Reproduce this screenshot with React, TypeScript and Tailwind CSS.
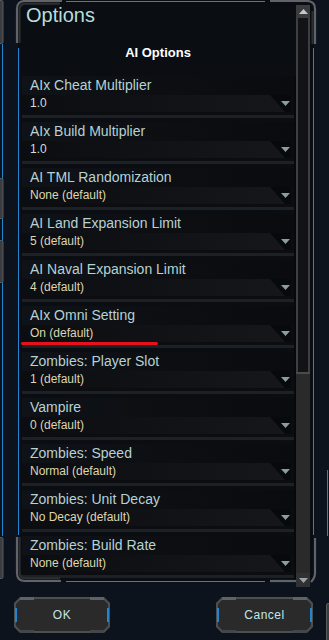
import React from 'react';

type Opt = { label: string; value: string; isDefault: boolean };

const options: Opt[] = [
  { label: 'AIx Cheat Multiplier', value: '1.0', isDefault: false },
  { label: 'AIx Build Multiplier', value: '1.0', isDefault: false },
  { label: 'AI TML Randomization', value: 'None (default)', isDefault: true },
  { label: 'AI Land Expansion Limit', value: '5 (default)', isDefault: true },
  { label: 'AI Naval Expansion Limit', value: '4 (default)', isDefault: true },
  { label: 'AIx Omni Setting', value: 'On (default)', isDefault: true },
  { label: 'Zombies: Player Slot', value: '1 (default)', isDefault: true },
  { label: 'Vampire', value: '0 (default)', isDefault: true },
  { label: 'Zombies: Speed', value: 'Normal (default)', isDefault: true },
  { label: 'Zombies: Unit Decay', value: 'No Decay (default)', isDefault: true },
  { label: 'Zombies: Build Rate', value: 'None (default)', isDefault: true },
];

const DownArrow = ({ color = '#8d9c9d' }: { color?: string }) => (
  <svg width="9" height="5" viewBox="0 0 9 5">
    <path d="M0 0 H9 L4.5 5 Z" fill={color} />
  </svg>
);

const OptionRow = ({ opt, marked }: { opt: Opt; marked?: boolean }) => (
  <div className="relative h-[46px]">
    <div className="h-[42px] bg-[#0b0d11] border-b-[3px] border-[#1d2025]">
      <div className="h-[19px] pl-2 text-[14px] leading-[19px] text-[#b6d2d4] bg-[linear-gradient(90deg,#0f1217,#0a0b0e)]">
        {opt.label}
      </div>
      <div className="relative ml-[2px] mr-[3px] h-[17px] bg-[#08090c]">
        <div className="absolute inset-0 bg-[linear-gradient(90deg,#0b0d11,#15171b)] [clip-path:polygon(0_0,calc(100%-21px)_0,calc(100%-6px)_100%,0_100%)]" />
        <div className="relative flex h-full items-center justify-between pl-[6px] pr-[1px]">
          <span
            className={
              opt.isDefault
                ? 'text-[12px] leading-[17px] text-[#ddd6b0]'
                : 'text-[12px] leading-[17px] text-[#d2dcdc]'
            }
          >
            {opt.value}
          </span>
          <DownArrow />
        </div>
      </div>
    </div>
    {marked && (
      <div className="absolute left-[-1px] top-[36px] h-[3px] w-[137px] rounded-full bg-[#e8101a]" />
    )}
  </div>
);

const Button = ({ label, width }: { label: string; width: string }) => (
  <div className={`relative h-[36px] ${width}`}>
    <div className="absolute inset-0 bg-[#4c4f52] [clip-path:polygon(6px_0,calc(100%-6px)_0,100%_6px,100%_calc(100%-6px),calc(100%-6px)_100%,6px_100%,0_calc(100%-6px),0_6px)]" />
    <div className="absolute inset-[2px] bg-[#2a2a2b] [clip-path:polygon(5px_0,calc(100%-5px)_0,100%_5px,100%_calc(100%-5px),calc(100%-5px)_100%,5px_100%,0_calc(100%-5px),0_5px)]" />
    <div className="absolute left-[6px] top-0 h-[3px] w-[14px] bg-[#5f6266]" />
    <div className="absolute right-[6px] top-0 h-[3px] w-[14px] bg-[#5f6266]" />
    <div className="absolute left-[6px] bottom-0 h-[3px] w-[14px] bg-[#44474a]" />
    <div className="absolute right-[6px] bottom-0 h-[3px] w-[14px] bg-[#44474a]" />
    <div className="absolute left-[1px] top-[11px] h-[14px] w-[2px] bg-[#2186cf]" />
    <div className="absolute right-[1px] top-[11px] h-[14px] w-[2px] bg-[#2186cf]" />
    <div className="relative flex h-full items-center justify-center text-[12px] tracking-[0.5px] text-[#c4e6e6]">
      {label}
    </div>
  </div>
);

const App: React.FC = () => {
  return (
    <div className="relative w-[329px] h-[640px] overflow-hidden bg-[#0c131d] font-['Liberation_Sans',Arial,sans-serif]">
      <div className="flex h-[590px]">
        <div className="w-[18px] shrink-0" />

        {/* main panel */}
        <div className="flex h-[582px] w-[278px] shrink-0 flex-col bg-[#0a0d12]">
          <div className="h-[27px] pl-2 pt-[3px] text-[20px] leading-[24px] text-[#b6dede]">Options</div>
          <div className="mt-[18px] h-[16px] pl-[4px] pr-[2px] text-center text-[13px] font-bold leading-[16px] text-white">
            AI Options
          </div>
          <div className="mt-[15px] flex flex-1 pl-[4px]">
            <div className="w-[272px]">
              {options.map((o, i) => (
                <OptionRow key={o.label} opt={o} marked={i === 5} />
              ))}
            </div>
            <div className="w-[2px] bg-[#07080a]" />
          </div>
        </div>

        {/* scrollbar */}
        <div className="flex h-[587px] w-[14px] shrink-0 flex-col bg-[#0a0d12] pt-[5px]">
          <div className="flex h-[13px] items-center justify-center bg-[#3b3c3e]">
            <svg width="9" height="5" viewBox="0 0 9 5">
              <path d="M0 5 H9 L4.5 0 Z" fill="#c4c8ca" />
            </svg>
          </div>
          <div className="flex-1 border-x-2 border-[#3d3e41] bg-[#111317]" />
          <div className="h-[201px] border-t-2 border-[#4a4b4d] bg-[#2a2a2b]" />
          <div className="flex h-[14px] items-center justify-center bg-[#303132]">
            <DownArrow color="#9aa3a6" />
          </div>
        </div>
        <div className="h-[582px] w-[4px] bg-[#0a0d12]" />
      </div>

      {/* buttons */}
      <div className="mt-[7px] flex pl-[14px]">
        <Button label="OK" width="w-[96px]" />
        <div className="w-[106px]" />
        <Button label="Cancel" width="w-[97px]" />
      </div>

      {/* frame decoration */}
      <svg className="pointer-events-none absolute left-0 top-0" width="329" height="640" viewBox="0 0 329 640" fill="none">
        {/* blue lines */}
        <g stroke="#2186cf" strokeWidth="1">
          <path d="M66 1.5 H265" />
          <path d="M66 581.5 H265" />
          <path d="M18.5 48 V535" />
          <path d="M313.5 48 V535" />
          <path d="M2.5 44 V536" />
          <path d="M327.5 470 V536" />
        </g>
        {/* gray corners */}
        <g strokeWidth="2.2">
          <path d="M17 43 V9 Q17 1 25 1 H62" stroke="#606367" />
          <path d="M19.5 43 V10 Q19.5 3.6 26 3.6 H60" stroke="#2c2e31" />
          <path d="M270 1 H307 Q315 1 315 9 V44" stroke="#606367" />
          <path d="M312.6 44 V11" stroke="#2c2e31" />
          <path d="M17 537 V573 Q17 581 25 581 H61" stroke="#606367" />
          <path d="M19.5 537 V572 Q19.5 578.4 26 578.4 H60" stroke="#2c2e31" />
          <path d="M315 538 V573 Q315 578 311 582" stroke="#606367" />
          <path d="M270 581 H296" stroke="#606367" />
        </g>
        {/* left edge tabs */}
        <g fill="#3a3c3f" stroke="#585b5f" strokeWidth="1">
          <rect x="-3" y="0.5" width="6" height="43" rx="1.5" />
          <rect x="-3" y="178.5" width="6" height="40" rx="1.5" />
          <rect x="-3" y="240.5" width="6" height="42" rx="1.5" />
          <rect x="-3" y="537.5" width="6" height="41" rx="1.5" />
          <rect x="326.5" y="603.5" width="6" height="40" rx="1.5" />
        </g>
      </svg>
    </div>
  );
};

export default App;
